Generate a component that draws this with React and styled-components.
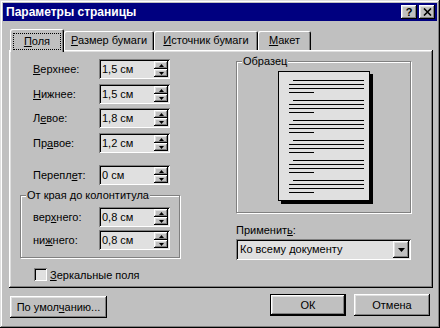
import React from "react";
import styled, { createGlobalStyle } from "styled-components";

const GlobalStyle = createGlobalStyle`
  html, body {
    margin: 0;
    padding: 0;
    background: #c0c0c0;
  }
  body {
    font-family: "Liberation Sans", Arial, sans-serif;
    font-size: 11px;
    color: #000;
  }
`;

const raised = `
  box-shadow: inset -1px -1px #000, inset 1px 1px #fff,
    inset -2px -2px #808080, inset 2px 2px #dfdfdf;
`;

const sunken = `
  box-shadow: inset 1px 1px #808080, inset -1px -1px #fff,
    inset 2px 2px #000, inset -2px -2px #dfdfdf;
`;

const Window = styled.div`
  width: 440px;
  height: 328px;
  box-sizing: border-box;
  padding: 3px;
  background: #c0c0c0;
  box-shadow: inset -1px -1px #000, inset 1px 1px #dfdfdf,
    inset -2px -2px #808080, inset 2px 2px #fff;
  display: flex;
  flex-direction: column;
`;

const TitleBar = styled.div`
  height: 18px;
  flex: none;
  background: #000080;
  display: flex;
  align-items: center;
  padding: 0 2px 0 3px;
  color: #fff;
`;

const Title = styled.div`
  flex: 1;
  font-weight: bold;
  font-size: 12px;
  line-height: 18px;
`;

const TitleButton = styled.div`
  width: 16px;
  height: 14px;
  margin-left: ${(p) => (p.$gap ? 2 : 0)}px;
  background: #c0c0c0;
  ${raised}
  display: flex;
  align-items: center;
  justify-content: center;
  color: #000;
  font-weight: bold;
  font-size: 11px;
  line-height: 14px;
`;

const Body = styled.div`
  flex: 1;
  display: flex;
  flex-direction: column;
  padding: 8px 5px 0 6px;
`;

const Tabs = styled.div`
  display: flex;
  align-items: flex-end;
  margin-left: 1px;
  height: 21px;
`;

const Tab = styled.div`
  position: relative;
  box-sizing: border-box;
  width: ${(p) => p.$w}px;
  height: ${(p) => (p.$active ? 23 : 19)}px;
  margin-bottom: ${(p) => (p.$active ? -2 : 0)}px;
  z-index: ${(p) => (p.$active ? 2 : 0)};
  background: #c0c0c0;
  border-radius: 2px 2px 0 0;
  box-shadow: inset 1px 1px #fff, inset -1px 0 #000, inset -2px 0 #808080;
  display: flex;
  align-items: ${(p) => (p.$active ? "flex-start" : "center")};
  justify-content: center;
  padding-top: ${(p) => (p.$active ? 4 : 0)}px;
  line-height: 13px;
`;

const FocusRect = styled.span`
  display: inline-flex;
  align-items: center;
  justify-content: center;
  box-sizing: border-box;
  width: 48px;
  height: 17px;
  border: 1px dotted #000;
`;

const U = styled.span`
  text-decoration: underline;
`;

const Panel = styled.div`
  position: relative;
  z-index: 1;
  width: 424px;
  height: 238px;
  box-sizing: border-box;
  background: #c0c0c0;
  ${raised}
  display: flex;
  padding: 9px 0 0 11px;
`;

const LeftCol = styled.div`
  width: 160px;
  display: flex;
  flex-direction: column;
`;

const RightCol = styled.div`
  width: 175px;
  margin-left: 56px;
  display: flex;
  flex-direction: column;
`;

const Row = styled.div`
  display: flex;
  align-items: center;
  height: 20px;
  margin-top: ${(p) => p.$mt || 0}px;
  padding-left: ${(p) => (p.$indent ? 13 : 0)}px;
`;

const Label = styled.div`
  width: 66px;
  white-space: nowrap;
`;

const Field = styled.div`
  width: 71px;
  height: 20px;
  box-sizing: border-box;
  padding: 2px;
  background: #e0e0e0;
  ${sunken}
  display: flex;
  align-items: stretch;
`;

const FieldText = styled.div`
  flex: 1;
  padding-left: 1px;
  line-height: 16px;
`;

const Spin = styled.div`
  width: 14px;
  display: flex;
  flex-direction: column;
`;

const SpinButton = styled.div`
  flex: 1;
  background: #c0c0c0;
  ${raised}
  display: flex;
  align-items: center;
  justify-content: center;
`;

const Group = styled.div`
  position: relative;
  box-sizing: border-box;
  height: ${(p) => p.$h}px;
  margin-top: ${(p) => p.$mt || 0}px;
  border: 1px solid #808080;
  box-shadow: inset 1px 1px #fff, 1px 1px #fff;
  padding: ${(p) => p.$pad};
  display: flex;
  flex-direction: column;
`;

const Legend = styled.div`
  position: absolute;
  top: -7px;
  left: 5px;
  padding: 0 1px;
  background: #c0c0c0;
  line-height: 13px;
  white-space: nowrap;
`;

const CheckRow = styled.label`
  display: flex;
  align-items: center;
  margin-top: 10px;
  padding-left: 14px;
  height: 13px;
`;

const CheckBox = styled.span`
  width: 13px;
  height: 13px;
  box-sizing: border-box;
  background: #e0e0e0;
  ${sunken}
  margin-right: 3px;
`;

const PreviewWrap = styled.div`
  display: flex;
  justify-content: center;
  padding-left: 4px;
`;

const FieldCaption = styled.div`
  margin-top: 11px;
  line-height: 13px;
`;

const Combo = styled.div`
  margin-top: 2px;
  height: 21px;
  box-sizing: border-box;
  padding: 2px;
  background: #e0e0e0;
  ${sunken}
  display: flex;
`;

const ComboText = styled.div`
  flex: 1;
  padding-left: 2px;
  line-height: 17px;
`;

const DropButton = styled.div`
  width: 16px;
  background: #c0c0c0;
  ${raised}
  display: flex;
  align-items: center;
  justify-content: center;
`;

const Footer = styled.div`
  display: flex;
  align-items: flex-start;
  margin-top: 6px;
  padding: 0 2px 0 1px;
`;

const Button = styled.div`
  box-sizing: border-box;
  width: ${(p) => p.$w}px;
  height: 22px;
  margin-top: ${(p) => p.$mt || 0}px;
  margin-left: ${(p) => p.$ml || 0}px;
  background: #c0c0c0;
  border: ${(p) => (p.$default ? "1px solid #000" : "none")};
  ${raised}
  display: flex;
  align-items: center;
  justify-content: center;
  line-height: 13px;
`;

const ArrowUp = () => (
  <svg width="5" height="3" viewBox="0 0 5 3">
    <path d="M2.5 0 L5 3 L0 3 Z" fill="#000" />
  </svg>
);

const ArrowDown = ({ w = 5, h = 3 }) => (
  <svg width={w} height={h} viewBox={`0 0 ${w} ${h}`}>
    <path d={`M0 0 L${w} 0 L${w / 2} ${h} Z`} fill="#000" />
  </svg>
);

const CloseGlyph = () => (
  <svg width="9" height="8" viewBox="0 0 9 8">
    <path d="M1 0.5 L8 7.5 M8 0.5 L1 7.5" stroke="#000" strokeWidth="1.6" />
  </svg>
);

function SpinField({ value }) {
  return (
    <Field>
      <FieldText>{value}</FieldText>
      <Spin>
        <SpinButton>
          <ArrowUp />
        </SpinButton>
        <SpinButton>
          <ArrowDown />
        </SpinButton>
      </Spin>
    </Field>
  );
}

function PagePreview() {
  const lines = [];
  for (let p = 0; p < 6; p++) {
    const y = 9 + p * 20;
    lines.push([15, 86, y], [11, 86, y + 4], [11, 86, y + 8], [11, 36, y + 12]);
  }
  return (
    <svg width="95" height="133" viewBox="0 0 95 133">
      <rect x="3" y="3" width="92" height="130" fill="#000" />
      <rect x="0.5" y="0.5" width="91" height="129" fill="#e0e0e0" stroke="#000" />
      {lines.map(([x1, x2, y], i) => (
        <line key={i} x1={x1} x2={x2} y1={y + 0.5} y2={y + 0.5} stroke="#000" />
      ))}
    </svg>
  );
}

export default function App() {
  return (
    <>
      <GlobalStyle />
      <Window>
        <TitleBar>
          <Title>Параметры страницы</Title>
          <TitleButton>?</TitleButton>
          <TitleButton $gap>
            <CloseGlyph />
          </TitleButton>
        </TitleBar>
        <Body>
          <Tabs>
            <Tab $w={54} $active>
              <FocusRect>
                <span>
                  <U>П</U>оля
                </span>
              </FocusRect>
            </Tab>
            <Tab $w={90}>
              <span>
                <U>Р</U>азмер бумаги
              </span>
            </Tab>
            <Tab $w={104}>
              <span>
                <U>И</U>сточник бумаги
              </span>
            </Tab>
            <Tab $w={53}>
              <span>
                <U>М</U>акет
              </span>
            </Tab>
          </Tabs>
          <Panel>
            <LeftCol>
              <Row $indent>
                <Label>
                  <U>В</U>ерхнее:
                </Label>
                <SpinField value="1,5 см" />
              </Row>
              <Row $indent $mt={5}>
                <Label>
                  <U>Н</U>ижнее:
                </Label>
                <SpinField value="1,5 см" />
              </Row>
              <Row $indent $mt={4}>
                <Label>
                  Л<U>е</U>вое:
                </Label>
                <SpinField value="1,8 см" />
              </Row>
              <Row $indent $mt={5}>
                <Label>
                  Пр<U>а</U>вое:
                </Label>
                <SpinField value="1,2 см" />
              </Row>
              <Row $indent $mt={12}>
                <Label>
                  Перепл<U>е</U>т:
                </Label>
                <SpinField value="0 см" />
              </Row>
              <Group $h={63} $mt={10} $pad="11px 0 0 12px">
                <Legend>От края до колонтитула</Legend>
                <Row>
                  <Label>
                    вер<U>х</U>него:
                  </Label>
                  <SpinField value="0,8 см" />
                </Row>
                <Row $mt={3}>
                  <Label>
                    ни<U>ж</U>него:
                  </Label>
                  <SpinField value="0,8 см" />
                </Row>
              </Group>
              <CheckRow>
                <CheckBox />
                <span>
                  <U>З</U>еркальные поля
                </span>
              </CheckRow>
            </LeftCol>
            <RightCol>
              <Group $h={152} $mt={2} $pad="9px 0 0 0">
                <Legend>Образец</Legend>
                <PreviewWrap>
                  <PagePreview />
                </PreviewWrap>
              </Group>
              <FieldCaption>
                Применит<U>ь</U>:
              </FieldCaption>
              <Combo>
                <ComboText>Ко всему документу</ComboText>
                <DropButton>
                  <ArrowDown w={7} h={4} />
                </DropButton>
              </Combo>
            </RightCol>
          </Panel>
          <Footer>
            <Button $w={97} $mt={2}>
              <span>
                По умол<U>ч</U>анию...
              </span>
            </Button>
            <Button $w={76} $ml={163} $default>
              ОК
            </Button>
            <Button $w={76} $ml={8}>
              Отмена
            </Button>
          </Footer>
        </Body>
      </Window>
    </>
  );
}
